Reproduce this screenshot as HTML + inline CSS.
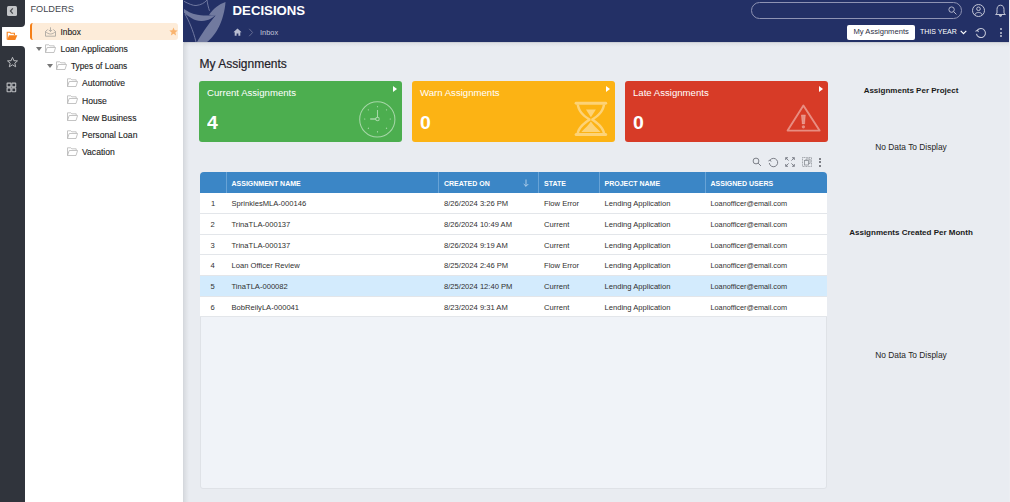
<!DOCTYPE html>
<html><head><meta charset="utf-8">
<style>
*{margin:0;padding:0;box-sizing:border-box}
html,body{width:1010px;height:502px;overflow:hidden;background:#e9ecf1;font-family:"Liberation Sans",sans-serif}
.a{position:absolute}
#rail{left:0;top:0;width:25px;height:502px}
#folders{left:25px;top:0;width:159px;height:502px;background:#fff;border-right:1px solid #d5d8dd}
#header{left:184px;top:0;width:826px;height:42px;background:#233066}
.ft{position:absolute;font-size:8px;color:#1e1e1e;-webkit-text-stroke:.12px #1e1e1e;white-space:nowrap;line-height:10px}
.card{position:absolute;top:81px;height:61px;width:202.5px;border-radius:3px;color:#fff;overflow:hidden}
.card .t{position:absolute;left:8px;top:6px;font-size:9.6px;white-space:nowrap;line-height:11px}
.card .n{position:absolute;left:8px;top:31.5px;font-size:18px;font-weight:bold;line-height:20px;transform:scaleX(1.08);transform-origin:0 0}
.card .p{position:absolute;right:4.5px;top:5px;width:0;height:0;border-left:4.5px solid #fff;border-top:3.5px solid transparent;border-bottom:3.5px solid transparent}
.th{position:absolute;top:0.5px;height:21px;color:#fff;font-size:7px;font-weight:bold;line-height:21px;white-space:nowrap}
.row{position:absolute;left:0;width:627px;height:20.6px;background:#fff;border-bottom:1px solid #e3e6ea}
.c{position:absolute;top:0.5px;line-height:19px;font-size:7.6px;color:#303030;white-space:nowrap}
.rt{position:absolute;font-size:8px;font-weight:bold;color:#1a1a1a;white-space:nowrap;text-align:center;width:180px;left:821px}
.nd{position:absolute;font-size:8.4px;color:#262626;white-space:nowrap;text-align:center;width:180px;left:821px}
</style></head><body>
<div id="rail" class="a" style="background:transparent">
  <div class="a" style="left:20px;top:20px;width:5px;height:32px;background:#fff"></div>
  <div class="a" style="left:0;top:0;width:25px;height:27px;background:#30343c;border-bottom-right-radius:4px"></div>
  <div class="a" style="left:0;top:27px;width:2px;height:19px;background:#30343c"></div>
  <div class="a" style="left:0;top:46px;width:25px;height:456px;background:#30343c;border-top-right-radius:4px"></div>
  <div class="a" style="left:2px;top:27px;width:23px;height:19px;background:#fff;border-radius:3px 0 0 3px"></div>
  <div class="a" style="left:6.5px;top:6px;width:10.5px;height:10px;background:#c3c5c8;border-radius:1.5px"></div>
  <svg class="a" style="left:6px;top:6px" width="11" height="10" viewBox="0 0 11 10"><path d="M6.8 2.3 L4.4 5 L6.8 7.7" fill="none" stroke="#44474c" stroke-width="1.2"/></svg>
  <svg class="a" style="left:6px;top:31px" width="12" height="10" viewBox="0 0 12 10"><path d="M1.2 8.6 V1.3 H3.9 L4.9 2.3 H8.4 V4" fill="none" stroke="#f7841f" stroke-width="1.1"/><path d="M3 4.3 H11.3 L9.3 8.9 H1.2 Z" fill="#f7841f"/></svg>
  <svg class="a" style="left:6px;top:56px" width="13" height="12" viewBox="0 0 13 12"><path d="M6.5 1.3 L7.9 4.7 L11.5 4.9 L8.8 7.2 L9.7 10.8 L6.5 8.8 L3.3 10.8 L4.2 7.2 L1.5 4.9 L5.1 4.7 Z" fill="none" stroke="#b9bbbe" stroke-width="1"/></svg>
  <svg class="a" style="left:6px;top:82px" width="11" height="11" viewBox="0 0 11 11" fill="none" stroke="#b9bbbe" stroke-width="1.1"><rect x="1.1" y="1.1" width="3.8" height="3.8" rx=".4"/><rect x="5.9" y="1.1" width="3.8" height="3.8" rx=".4"/><rect x="1.1" y="5.9" width="3.8" height="3.8" rx=".4"/><rect x="5.9" y="5.9" width="3.8" height="3.8" rx=".4"/></svg>
</div>
<div id="folders" class="a">
  <div class="a" style="left:5.5px;top:4px;font-size:9.2px;color:#44474e;line-height:11px">FOLDERS</div>
  <div class="a" style="left:5px;top:23px;width:148px;height:17px;background:#fdecd9;border-left:2px solid #f57f17;border-radius:3px"></div>
  <svg class="a" style="left:20px;top:26.6px" width="11" height="10" viewBox="0 0 11 10" fill="none" stroke="#a8a49e" stroke-width=".85"><path d="M5.5 0.3 V4.5 M3.8 2.9 L5.5 4.6 L7.2 2.9"/><path d="M2.7 2.5 L0.5 4.5 V9.2 H10.5 V4.5 L8.3 2.5"/><path d="M0.5 4.5 C2 6 3.5 7 5.5 7 C7.5 7 9 6 10.5 4.5"/></svg>
  <div class="ft" style="left:35.5px;top:26.5px;font-size:8.3px">Inbox</div>
  <svg class="a" style="left:143.5px;top:26.7px" width="9" height="9" viewBox="0 0 10 10"><path d="M5 0.5 L6.3 3.6 L9.6 3.8 L7.1 6 L7.9 9.4 L5 7.6 L2.1 9.4 L2.9 6 L0.4 3.8 L3.7 3.6 Z" fill="#f9b46f"/></svg>
<div class="a" style="left:11px;top:47.0px;width:0;height:0;border-top:4px solid #777;border-left:3px solid transparent;border-right:3px solid transparent"></div><svg class="a" style="left:20px;top:43.5px" width="11" height="9" viewBox="0 0 11 9" fill="none" stroke="#b5b5b5" stroke-width=".8"><path d="M0.5 8.5 V0.8 H3.8 L4.8 1.8 H9.2 V3.2"/><path d="M0.5 8.5 L2.2 3.5 H10.6 L9 8.5 Z"/></svg><div class="ft" style="left:35.5px;top:44.0px;font-size:8.6px">Loan Applications</div>
<div class="a" style="left:22px;top:64.2px;width:0;height:0;border-top:4px solid #777;border-left:3px solid transparent;border-right:3px solid transparent"></div><svg class="a" style="left:31px;top:60.7px" width="11" height="9" viewBox="0 0 11 9" fill="none" stroke="#b5b5b5" stroke-width=".8"><path d="M0.5 8.5 V0.8 H3.8 L4.8 1.8 H9.2 V3.2"/><path d="M0.5 8.5 L2.2 3.5 H10.6 L9 8.5 Z"/></svg><div class="ft" style="left:46px;top:61.2px;font-size:8.3px">Types of Loans</div>
<svg class="a" style="left:42px;top:77.9px" width="11" height="9" viewBox="0 0 11 9" fill="none" stroke="#b5b5b5" stroke-width=".8"><path d="M0.5 8.5 V0.8 H3.8 L4.8 1.8 H9.2 V3.2"/><path d="M0.5 8.5 L2.2 3.5 H10.6 L9 8.5 Z"/></svg><div class="ft" style="left:57px;top:78.4px;font-size:8.6px">Automotive</div>
<svg class="a" style="left:42px;top:95.1px" width="11" height="9" viewBox="0 0 11 9" fill="none" stroke="#b5b5b5" stroke-width=".8"><path d="M0.5 8.5 V0.8 H3.8 L4.8 1.8 H9.2 V3.2"/><path d="M0.5 8.5 L2.2 3.5 H10.6 L9 8.5 Z"/></svg><div class="ft" style="left:57px;top:95.6px;font-size:8.6px">House</div>
<svg class="a" style="left:42px;top:112.3px" width="11" height="9" viewBox="0 0 11 9" fill="none" stroke="#b5b5b5" stroke-width=".8"><path d="M0.5 8.5 V0.8 H3.8 L4.8 1.8 H9.2 V3.2"/><path d="M0.5 8.5 L2.2 3.5 H10.6 L9 8.5 Z"/></svg><div class="ft" style="left:57px;top:112.8px;font-size:8.6px">New Business</div>
<svg class="a" style="left:42px;top:129.5px" width="11" height="9" viewBox="0 0 11 9" fill="none" stroke="#b5b5b5" stroke-width=".8"><path d="M0.5 8.5 V0.8 H3.8 L4.8 1.8 H9.2 V3.2"/><path d="M0.5 8.5 L2.2 3.5 H10.6 L9 8.5 Z"/></svg><div class="ft" style="left:57px;top:130.0px;font-size:8.6px">Personal Loan</div>
<svg class="a" style="left:42px;top:146.7px" width="11" height="9" viewBox="0 0 11 9" fill="none" stroke="#b5b5b5" stroke-width=".8"><path d="M0.5 8.5 V0.8 H3.8 L4.8 1.8 H9.2 V3.2"/><path d="M0.5 8.5 L2.2 3.5 H10.6 L9 8.5 Z"/></svg><div class="ft" style="left:57px;top:147.2px;font-size:8.6px">Vacation</div>

</div>
<div id="header" class="a">

  <svg class="a" style="left:0;top:0" width="44" height="42" viewBox="0 0 44 42">
    <path d="M0 9 C4 11.5 7 13.5 10 14 C15 15 19 15.6 22 15.6 C26 15.5 29 15.2 31.5 15 C28.5 18 25 20.5 18 21 C11 21.5 5 17 0 12.8 Z" fill="#717a9f"/>
    <path d="M41.5 2 C41 10 38.5 21 33.5 29.5 C30 35.5 26 40 23 42 L13 42 C17 35 24 24.5 31.5 15.5 L25 14.8 C29 9 35 4 41.5 2 Z" fill="#717a9f"/>
    <path d="M0 1.3 C4 3.5 9 5.8 12 5.5 C17 5 20.5 3 23 0" fill="none" stroke="#737ba2" stroke-width=".95"/>
    <path d="M23 0 C23.5 4 24.5 8 25.5 10.8" fill="none" stroke="#737ba2" stroke-width=".95"/>
    <path d="M1 14 C5 21 9 30 12 42" fill="none" stroke="#737ba2" stroke-width=".95"/>
  </svg>
  <div class="a" style="left:48.6px;top:3px;font-size:13.2px;font-weight:bold;color:#fff;line-height:15px">DECISIONS</div>
  <svg class="a" style="left:49px;top:28px" width="9" height="8" viewBox="0 0 9 8"><path d="M4.5 0.5 L8.6 4.2 H7.3 V7.8 H5.4 V5.4 H3.6 V7.8 H1.7 V4.2 H0.4 Z" fill="#b9bdd1"/></svg>
  <svg class="a" style="left:64px;top:28px" width="6" height="9" viewBox="0 0 6 9"><path d="M1.2 0.8 L4.6 4.5 L1.2 8.2" fill="none" stroke="#6d7498" stroke-width=".9"/></svg>
  <div class="a" style="left:76px;top:27.5px;font-size:7.4px;color:#c3c7d9;line-height:9px">Inbox</div>
  <div class="a" style="left:567px;top:2px;width:211px;height:17px;border:1px solid #8e93b3;border-radius:9px"></div>
  <svg class="a" style="left:764px;top:6px" width="9" height="9" viewBox="0 0 9 9" fill="none" stroke="#b2b6cc" stroke-width="1"><circle cx="3.6" cy="3.6" r="2.7"/><path d="M5.6 5.6 L8.4 8.4"/></svg>
  <svg class="a" style="left:788px;top:4px" width="13" height="13" viewBox="0 0 13 13" fill="none" stroke="#c3c6d6" stroke-width="1"><circle cx="6.5" cy="6.5" r="6"/><circle cx="6.5" cy="4.8" r="1.8"/><path d="M2.6 10.9 C3.5 9 5 8.5 6.5 8.5 C8 8.5 9.5 9 10.4 10.9"/></svg>
  <svg class="a" style="left:811px;top:4px" width="11" height="13" viewBox="0 0 11 13" fill="none" stroke="#c3c6d6" stroke-width="1"><path d="M5.5 1.2 C3 1.2 2 3.2 2 5.5 V9.3 L0.6 10.5 H10.4 L9 9.3 V5.5 C9 3.2 8 1.2 5.5 1.2 Z"/><path d="M4.2 11.6 H6.8 L5.5 12.6 Z" fill="#c3c6d6"/></svg>
  <div class="a" style="left:663px;top:25px;width:68px;height:14.5px;background:#fff;border-radius:2px"></div>
  <div class="a" style="left:669.5px;top:27px;font-size:7.6px;color:#2b2f45;line-height:9px;white-space:nowrap">My Assignments</div>
  <div class="a" style="left:736px;top:26.5px;font-size:7px;color:#fff;line-height:9px;white-space:nowrap">THIS YEAR</div>
  <svg class="a" style="left:775.5px;top:30px" width="7" height="5" viewBox="0 0 7 5"><path d="M0.7 0.8 L3.5 3.6 L6.3 0.8" fill="none" stroke="#fff" stroke-width="1.15"/></svg>
  <svg class="a" style="left:790.5px;top:27px" width="12" height="12" viewBox="0 0 12 12" fill="none" stroke="#c8cbda" stroke-width="1.05"><path d="M2.3 3.4 A4.5 4.5 0 1 1 1.5 6.8"/><path d="M0.5 4.4 L2.4 3.3 L3.5 5.1"/></svg>
  <div class="a" style="left:816px;top:28px;width:2px;height:2px;background:#c3c6d6;border-radius:1px"></div>
  <div class="a" style="left:816px;top:31.5px;width:2px;height:2px;background:#c3c6d6;border-radius:1px"></div>
  <div class="a" style="left:816px;top:35px;width:2px;height:2px;background:#c3c6d6;border-radius:1px"></div>
</div>

<div class="a" style="left:184px;top:42px;width:826px;height:5px;background:linear-gradient(#c4c7ce,#dfe2e7 30%,#e9ecf1)"></div>
<div class="a" style="left:184px;top:42px;width:5px;height:460px;background:linear-gradient(90deg,rgba(0,0,0,.07),rgba(0,0,0,0))"></div>
<div class="a" style="left:183px;top:0;width:1px;height:42px;background:#233066"></div>
<div class="a" style="left:1009px;top:0;width:1px;height:502px;background:#eceef2"></div>
<div class="a" style="left:199.5px;top:56.5px;font-size:12px;color:#1f2128;-webkit-text-stroke:.2px #1f2128;line-height:14px;white-space:nowrap">My Assignments</div>

<div class="card" style="left:199px;background:#4cae4f">
  <div class="t">Current Assignments</div><div class="n">4</div><div class="p"></div>
  <svg class="a" style="left:160px;top:20px" width="38" height="38" viewBox="0 0 38 38" fill="none" stroke="rgba(255,255,255,.5)" stroke-width="1.05">
    <circle cx="18.3" cy="18.4" r="17.6"/><circle cx="18.5" cy="18" r="1.7"/><path d="M18.5 16.3 V9.1"/><path d="M16.8 18 H11.2" stroke-width="1.6"/>
    <g stroke-width="1.2" stroke-linecap="round"><path d="M18.5 5.5 v.2 M18.5 30.7 v.2 M5.6 18 h.2 M31.2 18 h.2 M9.3 8.8 l.15 .15 M27.6 8.8 l-.15 .15 M9.3 27.4 l.15 -.15 M27.6 27.4 l-.15 -.15"/></g>
  </svg>
</div>
<div class="card" style="left:412px;background:#fcb314">
  <div class="t">Warn Assignments</div><div class="n">0</div><div class="p"></div>
  <svg class="a" style="left:162px;top:20px" width="34" height="37" viewBox="0 0 34 37"><g opacity=".42" fill="#fff">
    <rect x="0.6" y="0.8" width="32.6" height="2.9" rx="1.45"/><rect x="0.6" y="32.1" width="32.6" height="3" rx="1.5"/>
    <path d="M2.55 3.5 C3.3 10 7.5 14.5 13.5 18.6 C7.5 22.8 3.3 27.3 2.55 32.3 H5.05 C5.8 28 9.8 23.5 16.6 19.4 V17.8 C9.8 13.7 5.8 9.2 5.05 3.5 Z"/>
    <path d="M31.25 3.5 C30.5 10 26.3 14.5 20.3 18.6 C26.3 22.8 30.5 27.3 31.25 32.3 H28.75 C28 28 24 23.5 17.2 19.4 V17.8 C24 13.7 28 9.2 28.75 3.5 Z"/>
    <path d="M11.9 8.6 H21.9 L16.9 16.3 Z"/>
    <path d="M16.9 20.6 C19 24 23 27.5 26.5 31 H7.3 C10.8 27.5 14.8 24 16.9 20.6 Z"/>
  </g></svg>
</div>
<div class="card" style="left:625px;background:#d73b27">
  <div class="t">Late Assignments</div><div class="n">0</div><div class="p"></div>
  <svg class="a" style="left:161px;top:23px" width="35" height="28" viewBox="0 0 35 28">
    <path d="M17.4 1.5 L33.6 26.6 H1.6 Z" fill="none" stroke="rgba(255,255,255,.42)" stroke-width="1.9" stroke-linejoin="round"/>
    <path d="M15.4 10.9 H19.4 L18.6 19.9 H16.2 Z" fill="rgba(255,255,255,.42)" stroke="rgba(255,255,255,.42)" stroke-width=".5" stroke-linejoin="round"/>
    <circle cx="17.4" cy="22.8" r="1.65" fill="rgba(255,255,255,.42)"/>
  </svg>
</div>

<div class="rt" style="top:86px">Assignments Per Project</div>
<div class="nd" style="top:141.5px">No Data To Display</div>
<div class="rt" style="top:228px">Assignments Created Per Month</div>
<div class="nd" style="top:349.5px">No Data To Display</div>

<div class="a" style="left:752px;top:157px" >
  <svg class="a" style="left:0;top:0" width="10" height="10" viewBox="0 0 10 10" fill="none" stroke="#6f737c" stroke-width=".9"><circle cx="4" cy="4" r="2.9"/><path d="M6.1 6.1 L9 9"/></svg>
  <svg class="a" style="left:16px;top:0" width="11" height="11" viewBox="0 0 11 11" fill="none" stroke="#6f737c" stroke-width=".9"><path d="M2 3.2 A4.2 4.2 0 1 1 1.3 6"/><path d="M0.4 4 L2 3 L3.1 4.6"/></svg>
  <svg class="a" style="left:33px;top:0" width="10" height="10" viewBox="0 0 10 10" fill="none" stroke="#6f737c" stroke-width=".85"><path d="M0.7 3 V0.7 H3 M0.7 0.7 L3.6 3.6 M7 0.7 H9.3 V3 M9.3 0.7 L6.4 3.6 M0.7 7 V9.3 H3 M0.7 9.3 L3.6 6.4 M9.3 7 V9.3 H7 M9.3 9.3 L6.4 6.4"/></svg>
  <svg class="a" style="left:50px;top:0" width="10" height="10" viewBox="0 0 10 10" fill="none" stroke="#8b8f96" stroke-width=".8"><rect x="0.5" y="0.5" width="9" height="9" stroke-dasharray="1 .6"/><rect x="2.5" y="3.5" width="4" height="4.5"/><path d="M4 3.5 V2 H8 V6.5 H6.5"/></svg>
  <div class="a" style="left:67px;top:1px;width:2px;height:2px;background:#5a5d63;border-radius:1px"></div>
  <div class="a" style="left:67px;top:4.3px;width:2px;height:2px;background:#5a5d63;border-radius:1px"></div>
  <div class="a" style="left:67px;top:7.6px;width:2px;height:2px;background:#5a5d63;border-radius:1px"></div>
</div>
<div class="a" style="left:200px;top:172px;width:626.5px;height:316.5px;background:#f0f3f8;box-shadow:inset 0 0 0 1px #dfe2e7;border-radius:4px 4px 3px 3px;overflow:hidden">
  <div class="a" style="left:0;top:0;width:627px;height:21px;background:#3b86c6"></div>
  <div class="a" style="left:26px;top:0;width:1px;height:21px;background:#68a3d6"></div>
  <div class="a" style="left:238.4px;top:0;width:1px;height:21px;background:#68a3d6"></div>
  <div class="a" style="left:338px;top:0;width:1px;height:21px;background:#68a3d6"></div>
  <div class="a" style="left:399px;top:0;width:1px;height:21px;background:#68a3d6"></div>
  <div class="a" style="left:505px;top:0;width:1px;height:21px;background:#68a3d6"></div>
  <div class="th" style="left:31.5px">ASSIGNMENT NAME</div>
  <div class="th" style="left:244px">CREATED ON</div>
  <svg class="a" style="left:323px;top:6.5px" width="6" height="8" viewBox="0 0 6 8" fill="none" stroke="#b9d4ec" stroke-width=".9"><path d="M3 0.5 V7.3 M0.7 5 L3 7.3 L5.3 5"/></svg>
  <div class="th" style="left:344px">STATE</div>
  <div class="th" style="left:404.5px">PROJECT NAME</div>
  <div class="th" style="left:510.5px">ASSIGNED USERS</div>
  <div class="row" style="top:21px;height:21px;background:#fff"><div class="c" style="left:11px">1</div><div class="c" style="left:31.5px">SprinklesMLA-000146</div><div class="c" style="left:244px">8/26/2024 3:26 PM</div><div class="c" style="left:344px">Flow Error</div><div class="c" style="left:404.5px">Lending Application</div><div class="c" style="left:510.5px;font-size:7.3px">Loanofficer@email.com</div></div>
  <div class="row" style="top:42px;height:21px;background:#fff"><div class="c" style="left:10.5px">2</div><div class="c" style="left:31.5px">TrinaTLA-000137</div><div class="c" style="left:244px">8/26/2024 10:49 AM</div><div class="c" style="left:344px">Current</div><div class="c" style="left:404.5px">Lending Application</div><div class="c" style="left:510.5px;font-size:7.3px">Loanofficer@email.com</div></div>
  <div class="row" style="top:63px;height:20px;background:#fff"><div class="c" style="left:10.5px">3</div><div class="c" style="left:31.5px">TrinaTLA-000137</div><div class="c" style="left:244px">8/26/2024 9:19 AM</div><div class="c" style="left:344px">Current</div><div class="c" style="left:404.5px">Lending Application</div><div class="c" style="left:510.5px;font-size:7.3px">Loanofficer@email.com</div></div>
  <div class="row" style="top:83px;height:21px;background:#fff"><div class="c" style="left:10.5px">4</div><div class="c" style="left:31.5px">Loan Officer Review</div><div class="c" style="left:244px">8/25/2024 2:46 PM</div><div class="c" style="left:344px">Flow Error</div><div class="c" style="left:404.5px">Lending Application</div><div class="c" style="left:510.5px;font-size:7.3px">Loanofficer@email.com</div></div>
  <div class="row" style="top:104px;height:21px;background:#d3ebfd"><div class="c" style="left:10.5px">5</div><div class="c" style="left:31.5px">TinaTLA-000082</div><div class="c" style="left:244px">8/25/2024 12:40 PM</div><div class="c" style="left:344px">Current</div><div class="c" style="left:404.5px">Lending Application</div><div class="c" style="left:510.5px;font-size:7.3px">Loanofficer@email.com</div></div>
  <div class="row" style="top:125px;height:20px;background:#fff"><div class="c" style="left:10.5px">6</div><div class="c" style="left:31.5px">BobReilyLA-000041</div><div class="c" style="left:244px">8/23/2024 9:31 AM</div><div class="c" style="left:344px">Current</div><div class="c" style="left:404.5px">Lending Application</div><div class="c" style="left:510.5px;font-size:7.3px">Loanofficer@email.com</div></div>
</div>
</body></html>
